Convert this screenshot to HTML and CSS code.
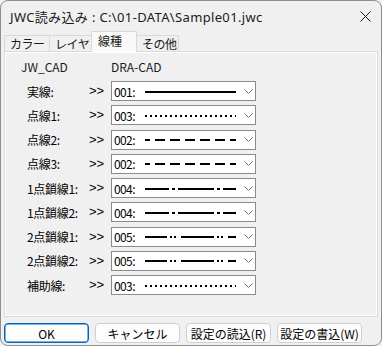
FILE: index.html
```html
<html>

<head>
	<title>JWC読み込み</title>
	<link rel="stylesheet" href="styles.css">
</head>

<body>
	<div class="window">
		<div class="titlebar">
			<span class="title">JWC読み込み : C:\01-DATA\Sample01.jwc</span>
			<svg class="close" width="11" height="11" viewBox="0 0 11 11">
				<path d="M0.5 0.5 L10.5 10.5 M10.5 0.5 L0.5 10.5" stroke="#1a1a1a" stroke-width="1" fill="none" />
			</svg>
		</div>

		<div class="tabs">
			<div class="tab">カラー</div>
			<div class="tab">レイヤ</div>
			<div class="tab tab-active">線種</div>
			<div class="tab">その他</div>
		</div>

		<div class="panel">
			<div class="head">
				<span class="head-jw">JW_CAD</span>
				<span class="head-dra">DRA-CAD</span>
			</div>

			<div class="rows">
				<div class="row">
					<span class="name">実線:</span><span class="arrow">&gt;&gt;</span>
					<div class="combo"><span class="code">001:</span><span class="line line-solid"></span><svg class="chev" width="9" height="5" viewBox="0 0 9 5"><path d="M0.5 0.5 L4.5 4.5 L8.5 0.5" stroke="#707070" fill="none" /></svg></div>
				</div>
				<div class="row">
					<span class="name">点線1:</span><span class="arrow">&gt;&gt;</span>
					<div class="combo"><span class="code">003:</span><span class="line line-dot"></span><svg class="chev" width="9" height="5" viewBox="0 0 9 5"><path d="M0.5 0.5 L4.5 4.5 L8.5 0.5" stroke="#707070" fill="none" /></svg></div>
				</div>
				<div class="row">
					<span class="name">点線2:</span><span class="arrow">&gt;&gt;</span>
					<div class="combo"><span class="code">002:</span><span class="line line-dash"></span><svg class="chev" width="9" height="5" viewBox="0 0 9 5"><path d="M0.5 0.5 L4.5 4.5 L8.5 0.5" stroke="#707070" fill="none" /></svg></div>
				</div>
				<div class="row">
					<span class="name">点線3:</span><span class="arrow">&gt;&gt;</span>
					<div class="combo"><span class="code">002:</span><span class="line line-dash"></span><svg class="chev" width="9" height="5" viewBox="0 0 9 5"><path d="M0.5 0.5 L4.5 4.5 L8.5 0.5" stroke="#707070" fill="none" /></svg></div>
				</div>
				<div class="row">
					<span class="name">1点鎖線1:</span><span class="arrow">&gt;&gt;</span>
					<div class="combo"><span class="code">004:</span><span class="line line-chain1"></span><svg class="chev" width="9" height="5" viewBox="0 0 9 5"><path d="M0.5 0.5 L4.5 4.5 L8.5 0.5" stroke="#707070" fill="none" /></svg></div>
				</div>
				<div class="row">
					<span class="name">1点鎖線2:</span><span class="arrow">&gt;&gt;</span>
					<div class="combo"><span class="code">004:</span><span class="line line-chain1"></span><svg class="chev" width="9" height="5" viewBox="0 0 9 5"><path d="M0.5 0.5 L4.5 4.5 L8.5 0.5" stroke="#707070" fill="none" /></svg></div>
				</div>
				<div class="row">
					<span class="name">2点鎖線1:</span><span class="arrow">&gt;&gt;</span>
					<div class="combo"><span class="code">005:</span><span class="line line-chain2"></span><svg class="chev" width="9" height="5" viewBox="0 0 9 5"><path d="M0.5 0.5 L4.5 4.5 L8.5 0.5" stroke="#707070" fill="none" /></svg></div>
				</div>
				<div class="row">
					<span class="name">2点鎖線2:</span><span class="arrow">&gt;&gt;</span>
					<div class="combo"><span class="code">005:</span><span class="line line-chain2"></span><svg class="chev" width="9" height="5" viewBox="0 0 9 5"><path d="M0.5 0.5 L4.5 4.5 L8.5 0.5" stroke="#707070" fill="none" /></svg></div>
				</div>
				<div class="row">
					<span class="name">補助線:</span><span class="arrow">&gt;&gt;</span>
					<div class="combo"><span class="code">003:</span><span class="line line-dot"></span><svg class="chev" width="9" height="5" viewBox="0 0 9 5"><path d="M0.5 0.5 L4.5 4.5 L8.5 0.5" stroke="#707070" fill="none" /></svg></div>
				</div>
			</div>
		</div>

		<div class="buttons">
			<button class="btn btn-default">OK</button>
			<button class="btn">キャンセル</button>
			<button class="btn">設定の読込(R)</button>
			<button class="btn">設定の書込(W)</button>
		</div>
	</div>
</body>

</html>
```

FILE: styles.css
```css
html,
body {
	margin: 0px;
	padding: 0px;
	background-color: #f0f0f0;
}

.window {
	width: 382px;
	height: 346px;
	box-sizing: border-box;
	border: 1px solid #8e8e8e;
	border-radius: 8px;
	background-color: #f0f0f0;
	font-family: "Noto Sans", "Noto Sans CJK JP", sans-serif;
	font-size: 12px;
	color: #000;
	overflow: hidden;
}

.titlebar {
	display: flex;
	align-items: center;
	justify-content: space-between;
	height: 30px;
	padding: 0px 10px 0px 9px;
}

.title {
	font-size: 13px;
	letter-spacing: 0.35px;
	color: #1a1a1a;
}

.tabs {
	display: flex;
	align-items: flex-end;
	height: 21px;
	margin-left: 3px;
}

.tab {
	box-sizing: border-box;
	height: 17px;
	padding: 0px 0px 0px 5px;
	border: 1px solid #d9d9d9;
	border-bottom: none;
	margin-right: -1px;
	line-height: 15px;
	white-space: nowrap;
	overflow: hidden;
	font-family: "Noto Sans CJK JP", sans-serif;
	font-size: 12px;
	letter-spacing: -0.5px;
	color: #1a1a1a;
}

.tab:nth-child(1) {
	width: 46px;
}

.tab:nth-child(2) {
	width: 44px;
}

.tab:nth-child(4) {
	width: 43px;
}

.tab-active {
	width: 46px;
	height: 21px;
	margin-left: -1px;
	margin-right: -1px;
	position: relative;
	z-index: 1;
	padding-left: 6px;
	line-height: 18px;
	letter-spacing: 0px;
	background-color: #f9f9f9;
	border-color: #d9d9d9;
}

.panel {
	box-sizing: border-box;
	width: 374px;
	height: 266px;
	margin-left: 3px;
	margin-top: -1px;
	border: 1px solid #d9d9d9;
	box-shadow: inset 1px 1px 0px #fff, inset -1px -1px 0px #fff;
	background-color: #f0f0f0;
	font-family: "Noto Sans CJK JP", sans-serif;
}

.head {
	display: flex;
	height: 16px;
	margin-top: 7px;
	line-height: 16px;
	color: #1a1a1a;
}

.head-jw {
	width: 90px;
	padding-left: 16px;
}

.rows {
	display: flex;
	flex-direction: column;
	gap: 4.25px;
	margin-top: 6px;
	padding-left: 22px;
}

.row {
	display: grid;
	grid-template-columns: 62px 22px 145px;
	align-items: center;
	height: 20px;
}

.name {
	font-size: 12px;
	letter-spacing: -0.3px;
}

.arrow {
	font-family: "Liberation Sans", sans-serif;
	font-size: 13px;
	line-height: 16px;
	letter-spacing: 0px;
}

.combo {
	display: flex;
	align-items: center;
	box-sizing: border-box;
	height: 20px;
	border: 1px solid #8a8a8a;
	background-color: #fff;
	padding-left: 2px;
}

.code {
	width: 31px;
	font-size: 12px;
	letter-spacing: -0.6px;
}

.line {
	display: block;
	width: 91px;
	height: 2px;
	margin-top: 1px;
	background-repeat: repeat-x;
}

.line-solid {
	background-color: #000;
}

.line-dot {
	background-image: linear-gradient(90deg, #000 0px 2px, transparent 2px 5px);
	background-size: 5px 2px;
}

.line-dash {
	background-image: linear-gradient(90deg, #000 0px 10px, transparent 10px 15px);
	background-size: 15px 2px;
	background-position: -5px 0px;
}

.line-chain1 {
	background-image: linear-gradient(90deg, #000 0px 36px, transparent 36px 39px, #000 39px 42px, transparent 42px 45px);
	background-size: 45px 2px;
	background-position: -12px 0px;
}

.line-chain2 {
	background-image: linear-gradient(90deg, #000 0px 33px, transparent 33px 36px, #000 36px 38px, transparent 38px 40px, #000 40px 42px, transparent 42px 47px);
	background-size: 47px 2px;
	background-position: -11px 0px;
}

.chev {
	margin-left: 8px;
}

.buttons {
	display: flex;
	gap: 6px;
	margin-top: 6px;
	margin-left: 3px;
}

.btn {
	box-sizing: border-box;
	width: 85px;
	height: 20px;
	padding: 0px;
	border: 1px solid #cfcfcf;
	border-radius: 4px;
	background-color: #fdfdfd;
	font-family: "Noto Sans CJK JP", sans-serif;
	font-size: 12px;
	color: #000;
	line-height: 17px;
}

.btn-default {
	border: 1px solid #0067c0;
	box-shadow: inset 0px 0px 0px 0.5px #0067c0;
}
```
